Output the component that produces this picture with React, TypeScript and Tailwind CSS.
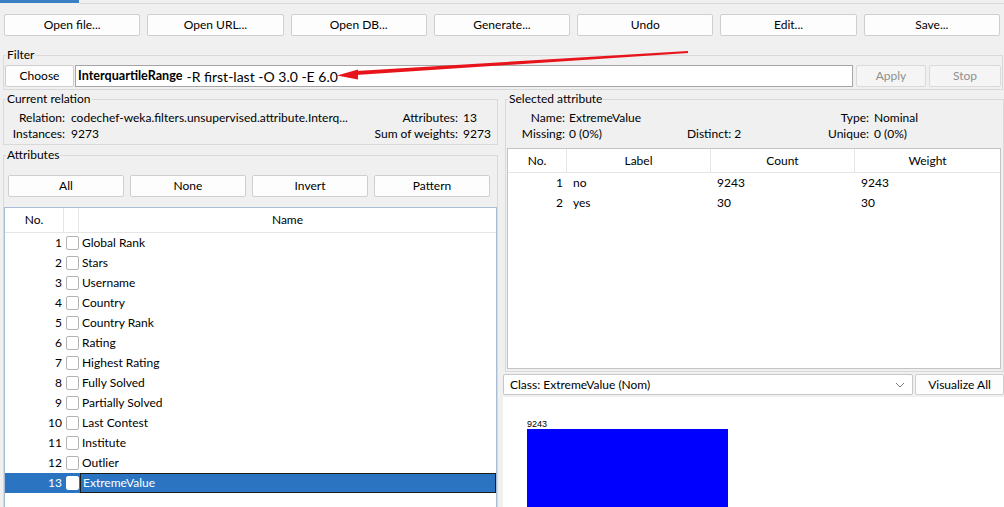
import React from 'react';

const topButtons = ['Open file...', 'Open URL...', 'Open DB...', 'Generate...', 'Undo', 'Edit...', 'Save...'];

const attributes = [
  'Global Rank',
  'Stars',
  'Username',
  'Country',
  'Country Rank',
  'Rating',
  'Highest Rating',
  'Fully Solved',
  'Partially Solved',
  'Last Contest',
  'Institute',
  'Outlier',
  'ExtremeValue',
];

const labels = [
  { no: 1, label: 'no', count: 9243, weight: 9243 },
  { no: 2, label: 'yes', count: 30, weight: 30 },
];

const Btn: React.FC<{ children: React.ReactNode; className?: string; disabled?: boolean }> = ({
  children,
  className = '',
  disabled,
}) => (
  <div
    className={`flex items-center justify-center rounded-[2px] border ${
      disabled ? 'border-[#dadada] bg-[#f5f5f5] text-[#8f8f8f]' : 'border-[#cfcfcf] bg-[#fdfdfd] text-black'
    } ${className}`}
  >
    {children}
  </div>
);

const Group: React.FC<{ title: string; className?: string; children: React.ReactNode }> = ({
  title,
  className = '',
  children,
}) => (
  <fieldset className={`border border-[#d9d9d9] ${className}`}>
    <legend className="ml-[2px] px-[1px] leading-[14px]">{title}</legend>
    {children}
  </fieldset>
);

export default function App() {
  return (
    <div className="relative h-[507px] w-[1004px] overflow-hidden bg-[#f0f0f0] font-['Lato','Noto_Sans',sans-serif] text-[12px] text-black">
      {/* tab indicator */}
      <div className="flex h-[4px]">
        <div className="h-[3px] w-[79px] bg-[#3c7fc3]" />
        <div className="flex-1 border-b border-[#d9d9d9]" />
      </div>

      {/* top buttons */}
      <div className="mt-[10px] grid h-[22px] grid-cols-7 gap-[7px] px-[4px]">
        {topButtons.map((b) => (
          <Btn key={b}>{b}</Btn>
        ))}
      </div>

      {/* filter */}
      <Group title="Filter" className="ml-[3px] mr-[1px] mt-[12px] pb-[2px] pr-[1px] pt-[3px]">
        <div className="flex h-[22px] items-stretch">
          <Btn className="ml-[1px] w-[69px]">Choose</Btn>
          <div className="ml-[1px] flex flex-1 items-center border border-[#a5a5a5] bg-white pl-[2px]">
            <span className="text-[12.6px] font-bold">InterquartileRange</span>
            <span className="ml-[4px] text-[14px]">-R first-last -O 3.0 -E 6.0</span>
          </div>
          <Btn disabled className="ml-[3px] w-[70px]">
            Apply
          </Btn>
          <Btn disabled className="ml-[3px] w-[72px]">
            Stop
          </Btn>
        </div>
      </Group>

      <div className="mt-[2px] flex">
        {/* left column */}
        <div className="ml-[3px] flex w-[495px] flex-col">
          <Group title="Current relation" className="pb-[2px] pt-[4px]">
            <div className="flex h-[16px] items-center">
              <span className="w-[61px] text-right">Relation:</span>
              <span className="ml-[6px]">codechef-weka.filters.unsupervised.attribute.Interq...</span>
              <span className="ml-auto text-right">Attributes:</span>
              <span className="ml-[5px] w-[34px]">13</span>
            </div>
            <div className="flex h-[16px] items-center">
              <span className="w-[61px] text-right">Instances:</span>
              <span className="ml-[6px]">9273</span>
              <span className="ml-auto text-right">Sum of weights:</span>
              <span className="ml-[5px] w-[34px]">9273</span>
            </div>
          </Group>

          <Group title="Attributes" className="mt-[3px] h-[400px] pt-[13px]">
            <div className="grid h-[22px] grid-cols-4 gap-[6px] pl-[4px] pr-[7px]">
              {['All', 'None', 'Invert', 'Pattern'].map((b) => (
                <Btn key={b}>{b}</Btn>
              ))}
            </div>
            <div className="mt-[10px] h-[320px] border border-[#a9bdd6] bg-white">
              <div className="flex h-[25px] border-b border-[#e5e5e5]">
                <div className="flex w-[59px] items-center justify-center border-r border-[#e5e5e5]">No.</div>
                <div className="w-[15px] border-r border-[#e5e5e5]" />
                <div className="flex flex-1 items-center justify-center">Name</div>
              </div>
              {attributes.map((a, i) => {
                const sel = i === attributes.length - 1;
                return (
                  <div key={a} className={`flex h-[20px] items-center ${sel ? 'bg-[#2a74c2] text-white' : ''}`}>
                    <span className="w-[57px] text-right">{i + 1}</span>
                    <span
                      className={`ml-[4px] h-[14px] w-[13px] rounded-[2px] border ${
                        sel ? 'border-white bg-white' : 'border-[#b3b3b3] bg-white'
                      }`}
                    />
                    <span
                      className={`ml-[1px] flex h-full flex-1 items-center pl-[2px] ${
                        sel ? 'border border-[#1b1b1b] pl-[1px]' : ''
                      }`}
                    >
                      {a}
                    </span>
                  </div>
                );
              })}
            </div>
          </Group>
        </div>

        {/* right column */}
        <div className="ml-[5px] flex w-[501px] flex-col">
          <Group title="Selected attribute" className="ml-[2px] pb-[2px] pt-[4px]">
            <div className="flex h-[16px] items-center">
              <span className="w-[59px] text-right">Name:</span>
              <span className="ml-[4px]">ExtremeValue</span>
              <span className="ml-auto w-[60px] text-right">Type:</span>
              <span className="ml-[5px] w-[129px]">Nominal</span>
            </div>
            <div className="flex h-[16px] items-center">
              <span className="w-[59px] text-right">Missing:</span>
              <span className="ml-[4px] w-[118px]">0 (0%)</span>
              <span>Distinct: 2</span>
              <span className="ml-auto w-[60px] text-right">Unique:</span>
              <span className="ml-[5px] w-[129px]">0 (0%)</span>
            </div>
            <div className="ml-[1px] mr-[2px] mt-[6px] h-[221px] border border-[#c4c4c4] bg-white">
              <div className="flex h-[24px] border-b border-[#e5e5e5]">
                <div className="flex w-[59px] items-center justify-center border-r border-[#e5e5e5]">No.</div>
                <div className="flex w-[144px] items-center justify-center border-r border-[#e5e5e5]">Label</div>
                <div className="flex w-[144px] items-center justify-center border-r border-[#e5e5e5]">Count</div>
                <div className="flex flex-1 items-center justify-center">Weight</div>
              </div>
              {labels.map((l) => (
                <div key={l.no} className="flex h-[20px] items-center">
                  <span className="w-[55px] text-right">{l.no}</span>
                  <span className="ml-[10px] w-[144px]">{l.label}</span>
                  <span className="w-[144px]">{l.count}</span>
                  <span>{l.weight}</span>
                </div>
              ))}
            </div>
          </Group>

          <div className="mt-[2px] flex h-[21px]">
            <div className="flex w-[410px] items-center justify-between rounded-[2px] border border-[#c8c8c8] bg-white pl-[6px] pr-[6px]">
              <span>Class: ExtremeValue (Nom)</span>
              <svg width="10" height="6" viewBox="0 0 10 6" className="mr-[1px]">
                <path d="M1 1 L5 5 L9 1" fill="none" stroke="#7a7a7a" strokeWidth="1" />
              </svg>
            </div>
            <Btn className="ml-[2px] flex-1">Visualize All</Btn>
          </div>

          <div className="mt-[2px] h-[120px] bg-white pl-[24px] pt-[22px]">
            <div className="font-['Liberation_Sans',sans-serif] text-[9px] leading-[10px]">9243</div>
            <div className="h-[90px] w-[201px] bg-[#0000ff]" />
          </div>
        </div>
      </div>

      {/* red annotation arrow */}
      <svg className="pointer-events-none absolute left-0 top-0" width="1004" height="507">
        <path d="M356 71 L688 51 L688 53 L356 75 Z" fill="#e8141b" />
        <path d="M337 75.5 L358 69.5 L358 79.5 Z" fill="#e8141b" />
      </svg>
    </div>
  );
}
